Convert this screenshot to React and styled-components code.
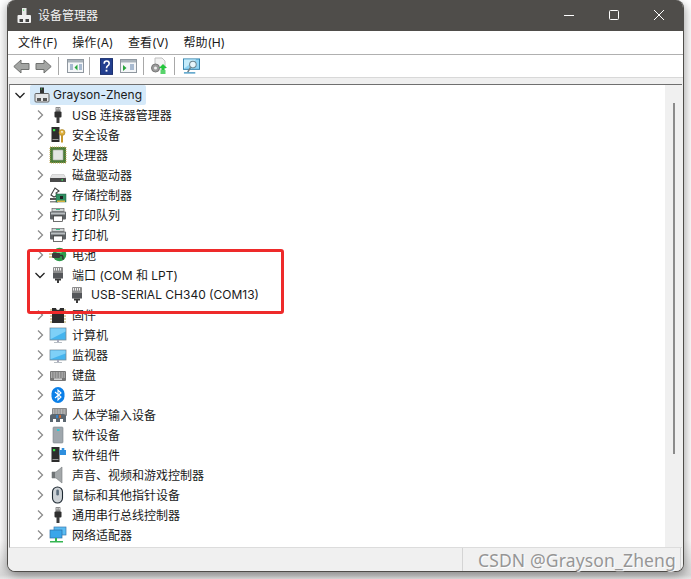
import React from "react";
import styled, { createGlobalStyle } from "styled-components";

const Global = createGlobalStyle`
  html, body { margin: 0; padding: 0; background: #fff; overflow: hidden; }
  body { width: 691px; height: 579px; font-family: "Inter", "Noto Sans CJK SC", sans-serif; }
`;
const FONT = `"Inter", "Noto Sans CJK SC", sans-serif`;

const Page = styled.div`
  position: relative;
  width: 691px;
  height: 579px;
  padding-left: 7px;
  box-sizing: border-box;
  background: linear-gradient(#fff 0, #fff 540px, #d8d8d8 575px, #e6e6e6 579px);
`;
const Win = styled.div`
  width: 677px;
  height: 572px;
  box-sizing: border-box;
  display: flex;
  flex-direction: column;
  border: 1px solid #4f4d4a;
  border-top: 0;
  border-radius: 8px;
  overflow: hidden;
  background: #f0f0f0;
  box-shadow: -4px 2px 8px rgba(0,0,0,.16), 3px 4px 8px rgba(0,0,0,.25);
  font-family: ${FONT};
  color: #1a1a1a;
`;
const TitleBar = styled.div`
  height: 31px;
  flex: none;
  background: #4f4d4a;
  display: flex;
  align-items: center;
  padding-left: 7px;
  color: #f2f2f2;
  font-size: 12px;
`;
const TitleText = styled.span`
  flex: 1;
  margin: 0 0 2px 5px;
`;
const WinBtn = styled.div`
  width: 45px;
  height: 31px;
  padding-bottom: 1px;
  box-sizing: border-box;
  display: flex;
  align-items: center;
  justify-content: center;
  margin-right: ${p => p.$mr || 0}px;
`;
const MenuBar = styled.div`
  height: 23px;
  flex: none;
  background: #fff;
  display: flex;
  align-items: center;
  padding: 0 0 2px 10px;
  gap: 14.5px;
  font-size: 12px;
  border-bottom: 1px solid #b0b0b0;
  box-sizing: content-box;
  height: 21px;
`;
const Toolbar = styled.div`
  height: 22px;
  flex: none;
  background: #fff;
  display: flex;
  align-items: center;
  border-bottom: 1px solid #d8d8d8;
  padding-left: 2px;
`;
const ToolIcon = styled.div`
  width: ${p => p.$w || 22}px;
  height: 22px;
  display: flex;
  align-items: center;
  justify-content: center;
`;
const Sep = styled.div`
  width: 1px;
  height: 18px;
  background: #a8a8a8;
  margin: 0 ${p => p.$r}px 0 ${p => p.$l}px;
`;
const Gap = styled.div`
  height: 6px;
  flex: none;
  background: #efefef;
`;
const Content = styled.div`
  flex: 1;
  min-height: 0;
  display: flex;
  background: #fff;
  border-top: 1px solid #6f6f6f;
  border-left: 1px solid #8f8f8f;
  border-bottom: 1px solid #dcdcdc;
  margin-left: 1px;
  margin-right: 1px;
`;
const Tree = styled.div`
  flex: 1;
  overflow: hidden;
`;
const Scroll = styled.div`
  width: 17px;
  background: #f0f0f0;
  flex: none;
  padding-top: 18px;
  box-sizing: border-box;
  display: flex;
  justify-content: center;
`;
const Thumb = styled.div`
  width: 2px;
  height: 351px;
  background: #8b8b8b;
`;
const Row = styled.div`
  height: 20px;
  display: flex;
  align-items: center;
  font-size: 12px;
  white-space: nowrap;
  padding-left: ${p => p.$pad}px;
`;
const Label = styled.span`
  margin-bottom: 2px;
`;
const Arrow = styled.div`
  width: 12px;
  height: 12px;
  flex: none;
  display: flex;
  align-items: center;
  justify-content: center;
`;
const IconBox = styled.div`
  width: 18px;
  height: 18px;
  flex: none;
  display: flex;
  align-items: center;
  justify-content: center;
  margin: 0 ${p => p.$gap ?? 5}px 0 ${p => p.$left ?? 3}px;
`;
const Hl = styled.div`
  display: flex;
  align-items: center;
  height: 20px;
  width: 116px;
  margin-left: 4px;
  background: #d5e9f9;
  border-radius: 2px;
`;
const Status = styled.div`
  height: 23px;
  flex: none;
  background: #f0f0f0;
  display: flex;
  justify-content: flex-end;
`;
const StatusCell = styled.div`
  width: ${p => p.$w}px;
  box-sizing: border-box;
  border-left: 1px solid #d4d4d4;
`;
const RedBox = styled.div`
  position: absolute;
  left: 27px;
  top: 249px;
  width: 251px;
  height: 59px;
  border: 3px solid #ee2a2a;
  border-radius: 3px;
`;
const Mark = styled.div`
  position: absolute;
  right: 15px;
  top: 548px;
  font: 17.5px "Noto Sans", sans-serif;
  color: #969696;
  text-shadow: 1px 1px 1px #fff;
  letter-spacing: .15px;
`;

const Chevron = ({ open }) => (
  <svg width="12" height="12" viewBox="0 0 12 12">
    {open
      ? <path d="M1.5 4 L6 8.500 L10.500 4" fill="none" stroke="#222" strokeWidth="1.300" />
      : <path d="M4 1.500 L8.500 6 L4 10.500" fill="none" stroke="#8c8c8c" strokeWidth="1.300" />}
  </svg>
);

const Usb = () => (
  <svg width="18" height="18" viewBox="0 0 18 18">
    <rect x="6.500" y="1" width="5" height="5" rx=".8" fill="#8a8a8a" /><rect x="7.500" y="2" width="1" height="1.500" fill="#eee"/><rect x="9.700" y="2" width="1" height="1.500" fill="#eee"/>
    <rect x="5.500" y="5.500" width="7" height="6" rx="1" fill="#2f2f2f" /><rect x="7.500" y="11" width="3" height="6" fill="#3a3a3a" />
  </svg>
);
const Port = () => (
  <svg width="18" height="18" viewBox="0 0 18 18">
    <rect x="4" y="1" width="10" height="11" rx="1" fill="#8e8e8e" />
    <path d="M5.500 2v2.500M7.500 2v2.500M9.500 2v2.500M11.500 2v2.500" stroke="#f0f0f0" strokeWidth="1" />
    <rect x="4" y="7" width="10" height="5.500" fill="#55575a" /><rect x="6" y="12.500" width="6" height="2" fill="#3b3b3b" /><rect x="8" y="14" width="2" height="3" fill="#3b3b3b" />
  </svg>
);
const Printer = () => (
  <svg width="18" height="18" viewBox="0 0 18 18">
    <rect x="3" y="2.500" width="12" height="3" fill="#cfd4d4" stroke="#555" strokeWidth=".6"/><rect x="7" y="3" width="4" height="1" fill="#35c08a"/>
    <rect x="1" y="5.500" width="16" height="8" rx="1" fill="#5f6366" /><rect x="2" y="6.500" width="14" height="2" fill="#b9bec0"/>
    <rect x="4.500" y="10" width="9" height="5.500" fill="#fff" stroke="#333" strokeWidth=".7" />
  </svg>
);
const Monitor = ({ h = 11 }) => (
  <svg width="18" height="18" viewBox="0 0 18 18">
    <rect x="1" y={14 - h} width="16" height={h} fill="#45b4ee" stroke="#7c8a94" strokeWidth=".8" />
    <path d={`M1.500 ${14 - h + .5}h15v3L2 ${14 - 1}h-.5z`} fill="#7ed0f7" />
    <rect x="8" y="14" width="2" height="2" fill="#aab" /><rect x="5" y="16" width="8" height="1" fill="#b8bec4" />
  </svg>
);
const Tower = ({ badge }) => (
  <svg width="18" height="18" viewBox="0 0 18 18">
    <rect x="2.500" y="1" width="8" height="15" fill="#2d2d2d" /><rect x="4" y="3" width="2.200" height="2.200" fill="#35e045" />
    <rect x="3.500" y="13" width="6" height="1" fill="#999" />
    {badge === "key" && <g><circle cx="13" cy="6.500" r="3" fill="#e0b23f" stroke="#9c7820" strokeWidth=".6" /><rect x="12" y="8.500" width="2" height="8" fill="#c7982d" /><circle cx="13" cy="5.800" r=".9" fill="#fff"/></g>}
    {badge === "puzzle" && <path d="M10.500 4h2.200V2h2.600v2H17v5h-6.500z" fill="#2e8fde" />}
  </svg>
);

const ICONS = {
  usb: <Usb />,
  sec: <Tower badge="key" />,
  cpu: (
    <svg width="18" height="18" viewBox="0 0 18 18">
      <rect x="1" y="1" width="16" height="16" fill="#4d7d38" stroke="#c7a857" strokeWidth="1" strokeDasharray="1 1" />
      <rect x="4" y="4" width="10" height="10" rx=".5" fill="#e4e6e2" stroke="#a8aca4" strokeWidth=".6" />
    </svg>
  ),
  disk: (
    <svg width="18" height="18" viewBox="0 0 18 18">
      <path d="M3 8.500h12l2 4H1z" fill="#e3e3e3" stroke="#b8b8b8" strokeWidth=".5"/>
      <rect x="1" y="12" width="16" height="4" rx=".6" fill="#4a4a4a" /><rect x="12.500" y="13.200" width="1.500" height="1.500" fill="#3fe05a" />
    </svg>
  ),
  storage: (
    <svg width="18" height="18" viewBox="0 0 18 18">
      <path d="M2 9 L6 2 L10 5 L7 7 L9 9 L5 11z" fill="#fff" stroke="#444" strokeWidth="1.100" />
      <rect x="1" y="12" width="7" height="2" fill="#555" /><rect x="1" y="15" width="8" height="1.500" fill="#888" />
      <rect x="7" y="8" width="10" height="8" fill="#2f8f62" stroke="#1c5c40" strokeWidth=".5" /><rect x="11" y="10" width="3" height="3" fill="#222" /><rect x="8" y="14.500" width="8" height="1.500" fill="#d9b440" />
    </svg>
  ),
  printer: <Printer />,
  battery: (
    <svg width="18" height="18" viewBox="0 0 18 18">
      <circle cx="10.500" cy="8.500" r="6.800" fill="#2f9a4c" /><path d="M6 5a6 6 0 0 1 9 0l-3 2H8z" fill="#7bdc8e" />
      <rect x="3" y="7" width="8" height="5" rx="1" fill="#3b3b3b" /><path d="M0 8h3M0 11h3" stroke="#c5a03a" strokeWidth="1.200" /><path d="M11 9.500h2q1 0 1 4" fill="none" stroke="#333" strokeWidth="1.500" />
    </svg>
  ),
  port: <Port />,
  firmware: (
    <svg width="18" height="18" viewBox="0 0 18 18">
      <rect x="3" y="2" width="12" height="15" fill="#2c2c2c" />
      <path d="M1 4h2M1 7h2M1 10h2M1 13h2M1 16h2M15 4h2M15 7h2M15 10h2M15 13h2M15 16h2" stroke="#b3a15a" strokeWidth="1" />
      <circle cx="9" cy="2" r="2" fill="#fff" />
    </svg>
  ),
  computer: <Monitor h={12} />,
  monitor: <Monitor h={10} />,
  keyboard: (
    <svg width="18" height="18" viewBox="0 0 18 18">
      <rect x="1" y="5" width="16" height="10" rx="1" fill="#777" />
      <path d="M2 7h14M2 9h14M2 11h14" stroke="#e5e5e5" strokeWidth="1" strokeDasharray="1 .6" /><rect x="5" y="12.500" width="8" height="1.300" fill="#e5e5e5"/>
    </svg>
  ),
  bt: (
    <svg width="18" height="18" viewBox="0 0 18 18">
      <rect x="2.500" y="1" width="13" height="16" rx="6.500" fill="#0a7fe8" />
      <path d="M6 6l6 5-3 3V4l3 3-6 5" fill="none" stroke="#fff" strokeWidth="1.100" />
    </svg>
  ),
  hid: (
    <svg width="18" height="18" viewBox="0 0 18 18">
      <rect x="3" y="2" width="15" height="8" rx="1" fill="#8a8a8a" /><path d="M4 4h13M4 6h13M4 8h13" stroke="#eee" strokeWidth=".9" strokeDasharray="1 .6" />
      <path d="M1 16V10q0-2 3-2h10q3 0 3 2v6h-3v-3h-3v3H7v-3H4v3z" fill="#5b6670" /><rect x="7" y="9" width="2" height="3" fill="#3b82c4" /><rect x="10" y="9" width="2" height="3" fill="#c86a34" />
    </svg>
  ),
  soft: (
    <svg width="18" height="18" viewBox="0 0 18 18">
      <rect x="4" y="1" width="10" height="16" rx="1" fill="#9fa7ad" stroke="#7d858b" strokeWidth=".6" /><rect x="8" y="3" width="2.500" height="2" fill="#2fc8d8" />
    </svg>
  ),
  comp: <Tower badge="puzzle" />,
  sound: (
    <svg width="18" height="18" viewBox="0 0 18 18">
      <path d="M3 6h4l6-5v16l-6-5H3z" fill="#a4a8aa" stroke="#767a7c" strokeWidth=".6" />
      <rect x="3" y="6" width="3" height="6" fill="#6f7375"/>
    </svg>
  ),
  mouse: (
    <svg width="18" height="18" viewBox="0 0 18 18">
      <rect x="3.500" y="1" width="10" height="16" rx="5" fill="#cdd2d6" stroke="#1f2a33" strokeWidth="1.100" />
      <rect x="7.300" y="3.500" width="2.600" height="6" rx="1.300" fill="#5c6d7c" />
    </svg>
  ),
  net: (
    <svg width="18" height="18" viewBox="0 0 18 18">
      <rect x="5" y="1" width="12" height="8" fill="#5bbcf2" stroke="#3a7ab0" strokeWidth=".7" />
      <rect x="1" y="4" width="12" height="8" fill="#3aa6ea" stroke="#2f6fa6" strokeWidth=".7" />
      <rect x="6" y="12" width="2" height="3" fill="#35b552" /><rect x="1" y="15" width="13" height="1.500" fill="#35b552" />
    </svg>
  ),
};

const ROOT_ICON = (
  <svg width="18" height="18" viewBox="0 0 18 18">
    <rect x="7" y="1.500" width="4" height="6" fill="#333" /><rect x="8" y="2.500" width="1" height="1" fill="#35e045" />
    <rect x="2" y="7.500" width="14" height="8.500" rx="1" fill="#e4e6e8" stroke="#555" strokeWidth=".9" />
    <rect x="4" y="12" width="4" height="3" fill="#555" /><rect x="10" y="12" width="4" height="3" fill="#555" />
  </svg>
);

const ITEMS = [
  ["usb", "USB 连接器管理器"], ["sec", "安全设备"], ["cpu", "处理器"], ["disk", "磁盘驱动器"],
  ["storage", "存储控制器"], ["printer", "打印队列"], ["printer", "打印机"], ["battery", "电池"],
  ["port", "端口 (COM 和 LPT)", true], ["child", "USB-SERIAL CH340 (COM13)"],
  ["firmware", "固件"], ["computer", "计算机"], ["monitor", "监视器"], ["keyboard", "键盘"],
  ["bt", "蓝牙"], ["hid", "人体学输入设备"], ["soft", "软件设备"], ["comp", "软件组件"],
  ["sound", "声音、视频和游戏控制器"], ["mouse", "鼠标和其他指针设备"], ["usb", "通用串行总线控制器"], ["net", "网络适配器"],
];

const Win11Glyph = ({ children }) => (
  <svg width="12" height="12" viewBox="0 0 12 12" fill="none" stroke="#fff" strokeWidth="1">{children}</svg>
);

export default function App() {
  return (
    <Page>
      <Global />
      <Win>
        <TitleBar>
          <svg width="18" height="18" viewBox="0 0 18 18">
            <rect x="7" y="1" width="4.500" height="7" fill="#e8e8e8" /><rect x="8" y="2.500" width="1.200" height="1.200" fill="#3fe05a" />
            <rect x="2.500" y="8" width="13.500" height="8" rx="1" fill="#f0f0f0" /><rect x="4.500" y="12" width="3.500" height="3" fill="#444" /><rect x="10.500" y="12" width="3.500" height="3" fill="#444" />
          </svg>
          <TitleText>设备管理器</TitleText>
          <WinBtn><Win11Glyph><path d="M1 6.500h10" /></Win11Glyph></WinBtn>
          <WinBtn><Win11Glyph><rect x="1.500" y="1.500" width="9" height="9" rx="1" /></Win11Glyph></WinBtn>
          <WinBtn $mr={2}><Win11Glyph><path d="M1 1l10 10M11 1L1 11" /></Win11Glyph></WinBtn>
        </TitleBar>
        <MenuBar>
          <span>文件(F)</span><span>操作(A)</span><span>查看(V)</span><span>帮助(H)</span>
        </MenuBar>
        <Toolbar>
          <ToolIcon>
            <svg width="17" height="15" viewBox="0 0 17 15"><path d="M.8 7.500L8 1v3.500h8v6H8V14z" fill="#a3a5a3" stroke="#6f716f" /></svg>
          </ToolIcon>
          <ToolIcon $w={23}>
            <svg width="17" height="15" viewBox="0 0 17 15"><path d="M16.200 7.500L9 1v3.500H1v6h8V14z" fill="#a3a5a3" stroke="#6f716f" /></svg>
          </ToolIcon>
          <Sep $l={3} $r={5} />
          <ToolIcon>
            <svg width="17" height="14" viewBox="0 0 17 14">
              <rect x=".5" y=".5" width="16" height="13" fill="#f4f6f8" stroke="#8f979f" /><rect x="1" y="1" width="15" height="2.500" fill="#a9b3bb" />
              <path d="M3 6h3M3 8h3M3 10h3M12 6h3M12 8h3M12 10h3" stroke="#5d7fa8" /><path d="M10.500 5.500v6L7.500 8.500z" fill="#27a53a" />
            </svg>
          </ToolIcon>
          <Sep $l={3} $r={5} />
          <ToolIcon>
            <svg width="13" height="17" viewBox="0 0 14 18">
              <rect x=".5" y=".5" width="13" height="17" fill="#233f8f" stroke="#14296a" />
              <path d="M4.500 6q0-3 2.700-3t2.700 2.800q0 1.500-1.700 2.500Q7 9.200 7 11" fill="none" stroke="#fff" strokeWidth="1.700" /><rect x="6" y="12.500" width="2" height="2" fill="#fff" />
            </svg>
          </ToolIcon>
          <ToolIcon>
            <svg width="17" height="14" viewBox="0 0 17 14">
              <rect x=".5" y=".5" width="16" height="13" fill="#f4f6f8" stroke="#8f979f" /><rect x="1" y="1" width="15" height="2.500" fill="#a9b3bb" />
              <path d="M3 6v6l3.500-3z" fill="#27a53a" /><path d="M10 6h4M10 8h4M10 10h4" stroke="#5d7fa8" />
            </svg>
          </ToolIcon>
          <Sep $l={4} $r={4} />
          <ToolIcon>
            <svg width="18" height="18" viewBox="0 0 18 18">
              <path d="M5 1h7l3 3v8H5z" fill="#f2f2f2" stroke="#c0c0c0" />
              <circle cx="5.500" cy="11" r="4" fill="#9a9a9a" stroke="#777" /><circle cx="5.500" cy="11" r="1.500" fill="#eee" />
              <path d="M13 7l4 4h-2.500v2h-3v-2H9z" fill="#22c53b" /><path d="M10.500 14h5M10.500 16h5" stroke="#22c53b" strokeWidth="1.300" />
            </svg>
          </ToolIcon>
          <Sep $l={4} $r={5} />
          <ToolIcon>
            <svg width="17" height="17" viewBox="0 0 18 18">
              <rect x=".5" y="1" width="17" height="11" fill="#8fd4f4" stroke="#2f7ea8" /><path d="M1 11L14 1.500H1z" fill="#c5ecfb" />
              <circle cx="10.500" cy="7" r="3.500" fill="#e7f6fc" stroke="#6f8791" strokeWidth="1.100" /><path d="M8 10l-3 5" stroke="#6f7d82" strokeWidth="1.600" /><rect x="1" y="15" width="12" height="1.500" fill="#4b9bc5" />
            </svg>
          </ToolIcon>
        </Toolbar>
        <Gap />
        <Content>
          <Tree>
            <Row $pad={4}>
              <Arrow><Chevron open /></Arrow>
              <Hl>
                <IconBox $left={3} $gap={2}>{ROOT_ICON}</IconBox>
                <Label>Grayson-Zheng</Label>
              </Hl>
            </Row>
            {ITEMS.map(([k, label, open]) =>
              k === "child" ? (
                <Row key={label} $pad={58}>
                  <IconBox $left={0} $gap={5}>{ICONS.port}</IconBox><Label>{label}</Label>
                </Row>
              ) : (
                <Row key={label} $pad={24}>
                  <Arrow><Chevron open={open} /></Arrow>
                  <IconBox>{ICONS[k]}</IconBox><Label>{label}</Label>
                </Row>
              )
            )}
          </Tree>
          <Scroll><Thumb /></Scroll>
        </Content>
        <Status>
          <StatusCell $w={218} />
          <StatusCell $w={3} />
        </Status>
      </Win>
      <RedBox />
      <Mark>CSDN @Grayson_Zheng</Mark>
    </Page>
  );
}
